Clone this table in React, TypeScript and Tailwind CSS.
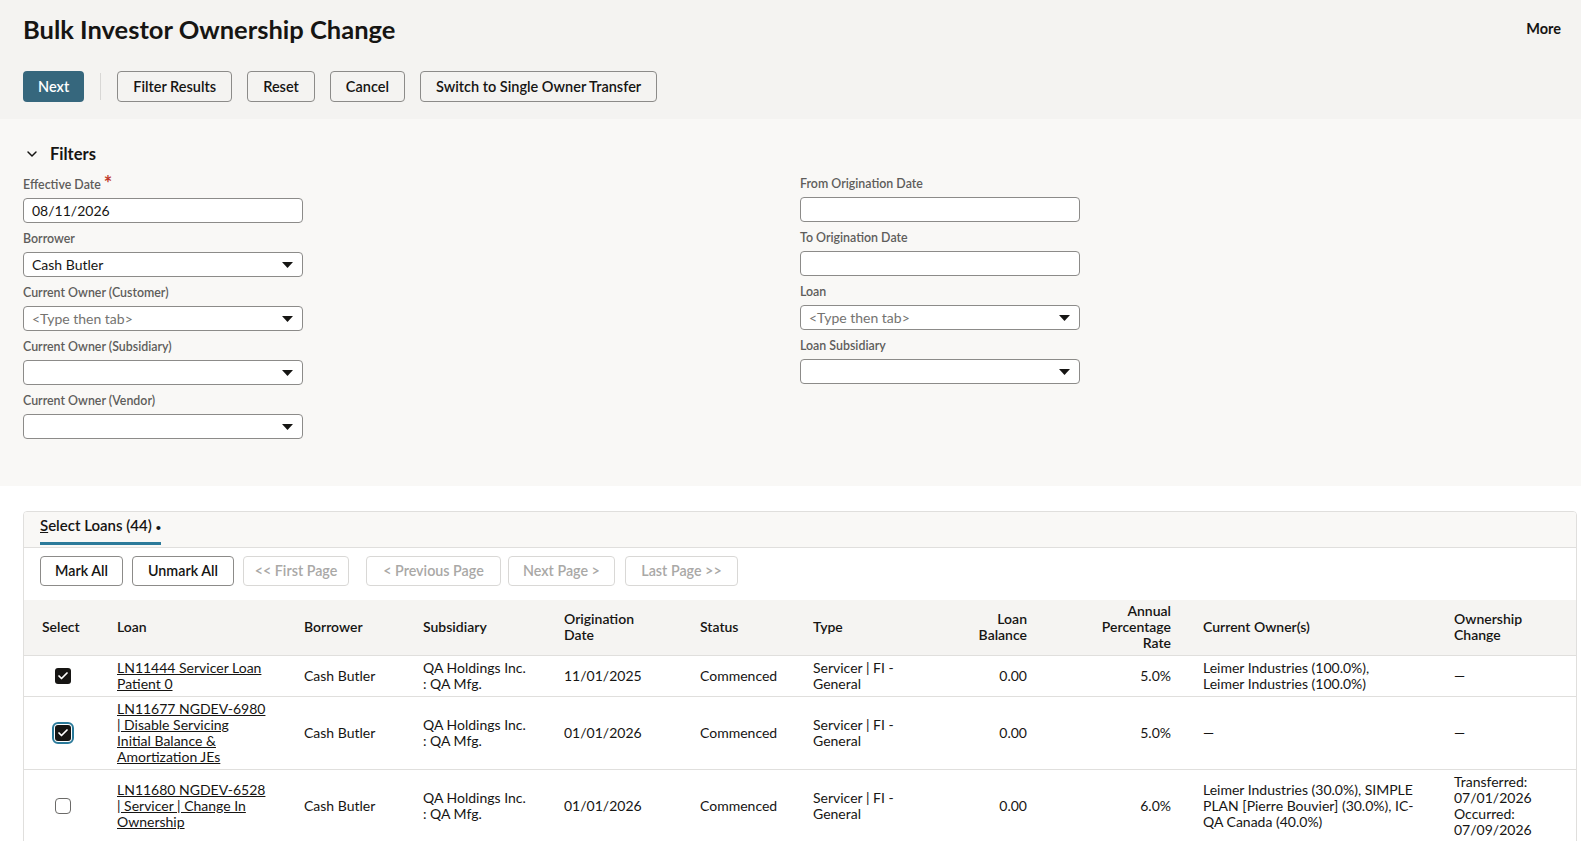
import { Check, ChevronDown } from "lucide-react"

type Field = { label: string; value?: string; placeholder?: string; select?: boolean; required?: boolean }

const leftFields: Field[] = [
  { label: "Effective Date", value: "08/11/2026", required: true },
  { label: "Borrower", value: "Cash Butler", select: true },
  { label: "Current Owner (Customer)", placeholder: "<Type then tab>", select: true },
  { label: "Current Owner (Subsidiary)", select: true },
  { label: "Current Owner (Vendor)", select: true },
]

const rightFields: Field[] = [
  { label: "From Origination Date" },
  { label: "To Origination Date" },
  { label: "Loan", placeholder: "<Type then tab>", select: true },
  { label: "Loan Subsidiary", select: true },
]

type Row = {
  state: "checked" | "focused" | "empty"
  loan: string[]
  subsidiary: string[]
  date: string
  type: string[]
  balance: string
  apr: string
  owners: string[]
  change: string[]
}

const rows: Row[] = [
  {
    state: "checked",
    loan: ["LN11444 Servicer Loan", "Patient 0"],
    subsidiary: ["QA Holdings Inc.", ": QA Mfg."],
    date: "11/01/2025",
    type: ["Servicer | FI -", "General"],
    balance: "0.00",
    apr: "5.0%",
    owners: ["Leimer Industries (100.0%),", "Leimer Industries (100.0%)"],
    change: ["—"],
  },
  {
    state: "focused",
    loan: ["LN11677 NGDEV-6980", "| Disable Servicing", "Initial Balance &", "Amortization JEs"],
    subsidiary: ["QA Holdings Inc.", ": QA Mfg."],
    date: "01/01/2026",
    type: ["Servicer | FI -", "General"],
    balance: "0.00",
    apr: "5.0%",
    owners: ["—"],
    change: ["—"],
  },
  {
    state: "empty",
    loan: ["LN11680 NGDEV-6528", "| Servicer | Change In", "Ownership"],
    subsidiary: ["QA Holdings Inc.", ": QA Mfg."],
    date: "01/01/2026",
    type: ["Servicer | FI -", "General"],
    balance: "0.00",
    apr: "6.0%",
    owners: ["Leimer Industries (30.0%), SIMPLE", "PLAN [Pierre Bouvier] (30.0%), IC-", "QA Canada (40.0%)"],
    change: ["Transferred:", "07/01/2026", "Occurred:", "07/09/2026"],
  },
]

function Caret() {
  return (
    <svg width="11" height="6" viewBox="0 0 11 6" className="shrink-0">
      <path d="M0 0h11L5.5 6z" fill="#161513" />
    </svg>
  )
}

function FormField({ field }: { field: Field }) {
  return (
    <div className="flex flex-col">
      <label className="text-[12.4px] leading-[16px] font-semibold text-[#5e5d5b] mb-[5px]">
        {field.label}
        {field.required && (
          <span className="text-[#c0392b] text-[20px] font-bold leading-[10px] ml-[3px] relative top-[2px]">*</span>
        )}
      </label>
      <div className="w-[280px] h-[25px] rounded-[4px] border border-[#8c8b89] bg-white flex items-center justify-between pl-[8px] pr-[9px]">
        {field.value ? (
          <span className="text-[14px] text-[#161513]">{field.value}</span>
        ) : (
          <span className="text-[14px] text-[#747370]">{field.placeholder ?? ""}</span>
        )}
        {field.select && <Caret />}
      </div>
    </div>
  )
}

function Lines({ lines }: { lines: string[] }) {
  return (
    <>
      {lines.map((l, i) => (
        <div key={i} className="whitespace-nowrap">{l}</div>
      ))}
    </>
  )
}

function CheckBox({ state }: { state: Row["state"] }) {
  if (state === "empty") {
    return <span className="inline-block w-[16px] h-[16px] rounded-[4px] border border-[#6b6a68] bg-white align-middle" />
  }
  return (
    <span
      className={
        "inline-flex items-center justify-center w-[16px] h-[16px] rounded-[3px] bg-[#161513] align-middle " +
        (state === "focused" ? "outline-2 outline-[#2b7a9a] outline-offset-[1px]" : "")
      }
    >
      <Check size={12} strokeWidth={3.5} color="#ffffff" />
    </span>
  )
}

const headerBtn = "h-[31px] px-[15px] rounded-[4px] border border-[#8c8b89] text-[14.5px] font-semibold text-[#161513]"
const cardBtn = "h-[30px] shrink-0 flex items-center justify-center rounded-[4px] border text-[14.3px] font-semibold"
const onBtn = cardBtn + " border-[#8c8b89] text-[#161513]"
const offBtn = cardBtn + " border-[#d9d8d6] text-[#a9a8a6]"

export default function App() {
  return (
    <div className="h-[841px] overflow-hidden bg-white text-[#161513] font-['Lato','Noto_Sans',sans-serif]">
      <header className="bg-[#f4f3f1] pl-[23px] pr-[20px] pt-[14px] pb-[17px]">
        <div className="flex items-center justify-between h-[30px]">
          <h1 className="text-[25.5px] font-bold leading-[30px]">Bulk Investor Ownership Change</h1>
          <span className="text-[14.5px] font-bold">More</span>
        </div>
        <div className="flex items-center mt-[27px]">
          <button className="h-[31px] px-[15px] rounded-[4px] bg-[#36677d] text-white text-[14.5px] font-semibold">Next</button>
          <span className="w-px h-[27px] bg-[#d8d7d5] mx-[16px]" />
          <div className="flex gap-[15px]">
            <button className={headerBtn}>Filter Results</button>
            <button className={headerBtn}>Reset</button>
            <button className={headerBtn + " px-[14px]"}>Cancel</button>
            <button className={headerBtn}>Switch to Single Owner Transfer</button>
          </div>
        </div>
      </header>

      <section className="bg-[#f9f8f6] px-[23px] pt-[25px] pb-[47px]">
        <div className="flex items-center h-[20px]">
          <ChevronDown size={16} strokeWidth={2.2} className="ml-[1px] mr-[10px]" />
          <h2 className="text-[16.5px] font-bold">Filters</h2>
        </div>
        <div className="flex mt-[12px]">
          <div className="w-[777px] shrink-0 flex flex-col gap-[8px]">
            {leftFields.map((f) => (
              <FormField key={f.label} field={f} />
            ))}
          </div>
          <div className="flex flex-col gap-[8px]">
            {rightFields.map((f) => (
              <FormField key={f.label} field={f} />
            ))}
          </div>
        </div>
      </section>

      <div className="pt-[25px] pl-[23px] pr-[4px]">
        <div className="border border-[#e0dfdd] rounded-t-[4px] overflow-hidden">
          <div className="bg-[#f9f8f6] h-[36px] border-b border-[#e0dfdd] pl-[16px] flex items-end">
            <div className="h-full flex flex-col justify-between">
              <span className="text-[15px] font-semibold pt-[5px] leading-[16px]">
                <span className="underline">S</span>elect Loans (44) <span className="text-[10px] align-middle">•</span>
              </span>
              <span className="block h-[3px] bg-[#2b7a9a] mb-[2px]" />
            </div>
          </div>

          <div className="flex items-center pl-[16px] pt-[8px] pb-[14px]">
            <button className={onBtn + " w-[83px]"}>Mark All</button>
            <button className={onBtn + " w-[102px] ml-[9px]"}>Unmark All</button>
            <button className={offBtn + " w-[106px] ml-[9px]"}>&lt;&lt; First Page</button>
            <button className={offBtn + " w-[135px] ml-[17px]"}>&lt; Previous Page</button>
            <button className={offBtn + " w-[107px] ml-[7px]"}>Next Page &gt;</button>
            <button className={offBtn + " w-[113px] ml-[10px]"}>Last Page &gt;&gt;</button>
          </div>

          <table className="w-full table-fixed border-collapse text-[14px] leading-[16px]">
            <colgroup>
              <col className="w-[77px]" />
              <col className="w-[187px]" />
              <col className="w-[119px]" />
              <col className="w-[141px]" />
              <col className="w-[136px]" />
              <col className="w-[113px]" />
              <col className="w-[117px]" />
              <col className="w-[129px]" />
              <col className="w-[144px]" />
              <col className="w-[251px]" />
              <col />
            </colgroup>
            <thead className="bg-[#f5f4f2]">
              <tr className="h-[55px] border-b border-[#e0dfdd]">
                <th className="text-left font-semibold pl-[18px]">Select</th>
                <th className="text-left font-semibold px-[16px]">Loan</th>
                <th className="text-left font-semibold px-[16px]">Borrower</th>
                <th className="text-left font-semibold px-[16px]">Subsidiary</th>
                <th className="text-left font-semibold px-[16px]">Origination<br />Date</th>
                <th className="text-left font-semibold px-[16px]">Status</th>
                <th className="text-left font-semibold px-[16px]">Type</th>
                <th className="text-right font-semibold px-[16px]">Loan<br />Balance</th>
                <th className="text-right font-semibold px-[16px]">Annual<br />Percentage<br />Rate</th>
                <th className="text-left font-semibold px-[16px]">Current Owner(s)</th>
                <th className="text-left font-semibold px-[16px]">Ownership<br />Change</th>
              </tr>
            </thead>
            <tbody>
              {rows.map((r, i) => (
                <tr key={i} className="border-b border-[#e0dfdd] align-middle">
                  <td className="text-center py-[4px]"><CheckBox state={r.state} /></td>
                  <td className="px-[16px] py-[4px] underline"><Lines lines={r.loan} /></td>
                  <td className="px-[16px] py-[4px]">Cash Butler</td>
                  <td className="px-[16px] py-[4px]"><Lines lines={r.subsidiary} /></td>
                  <td className="px-[16px] py-[4px]">{r.date}</td>
                  <td className="px-[16px] py-[4px]">Commenced</td>
                  <td className="px-[16px] py-[4px]"><Lines lines={r.type} /></td>
                  <td className="px-[16px] py-[4px] text-right">{r.balance}</td>
                  <td className="px-[16px] py-[4px] text-right">{r.apr}</td>
                  <td className="pl-[16px] pr-[4px] py-[4px]"><Lines lines={r.owners} /></td>
                  <td className="px-[16px] py-[4px]"><Lines lines={r.change} /></td>
                </tr>
              ))}
            </tbody>
          </table>
        </div>
      </div>
    </div>
  )
}
